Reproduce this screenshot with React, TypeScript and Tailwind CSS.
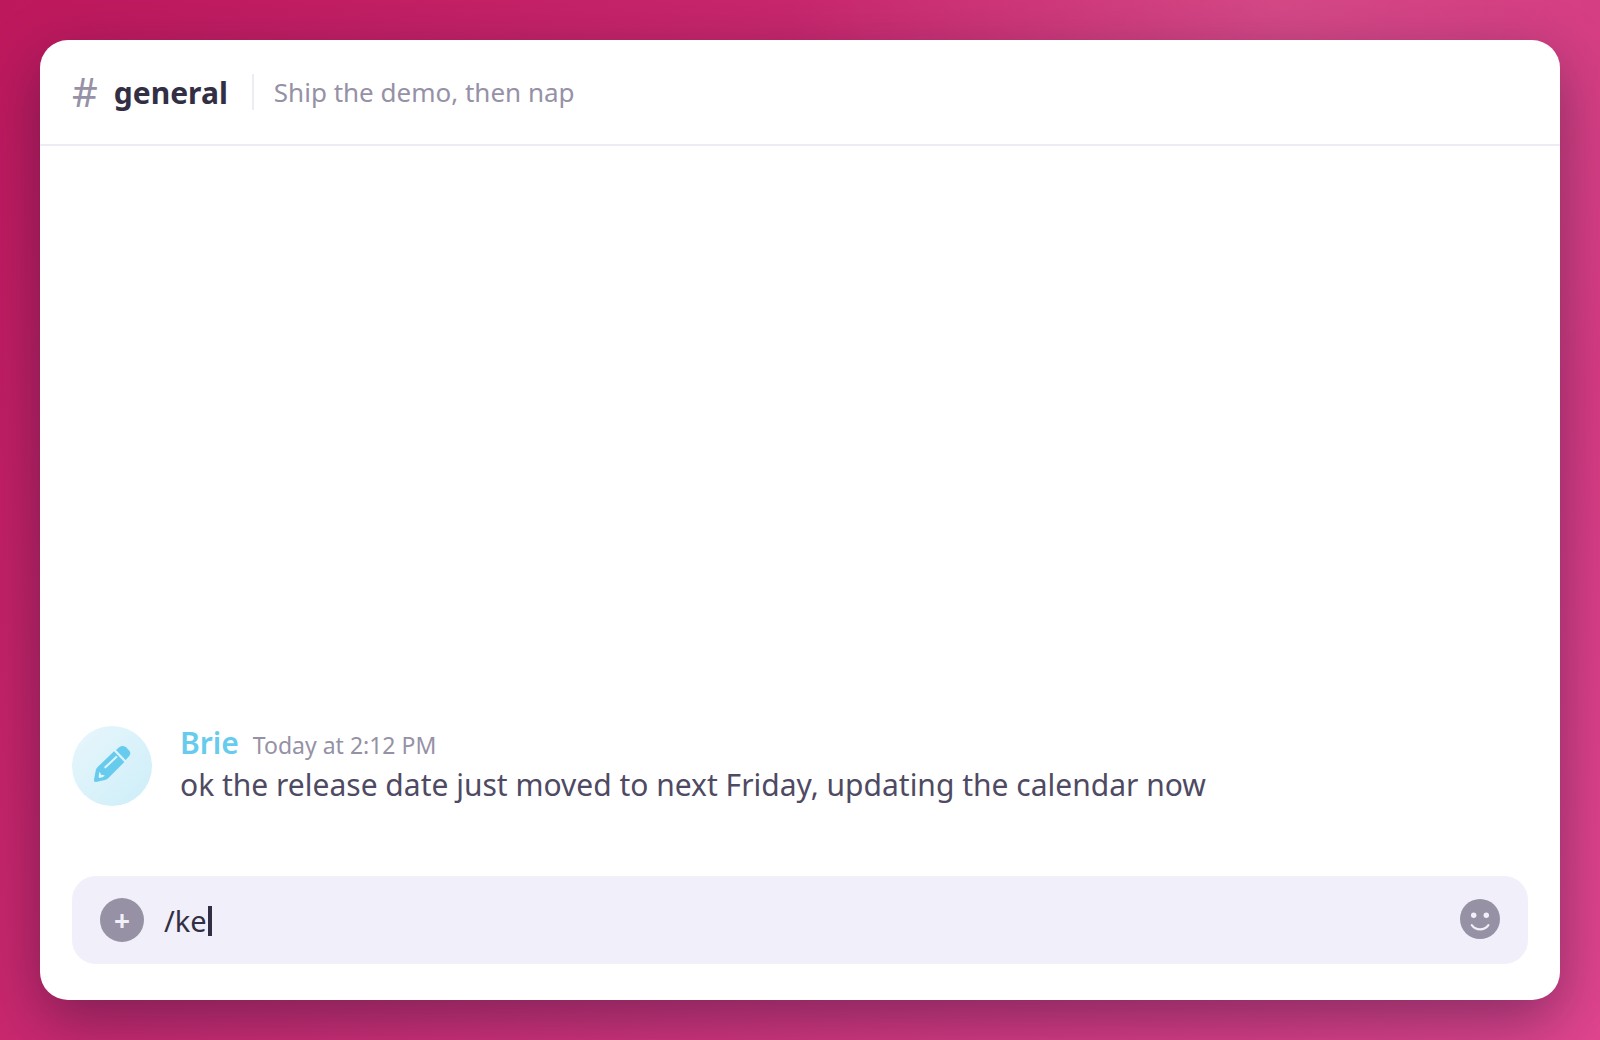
import { useState } from "react";

function ChannelHeader() {
  return (
    <header className="flex h-[106px] shrink-0 items-center border-b-2 border-[#edecf5] px-8">
      <span aria-hidden="true" className="text-[40px] leading-none text-[#9691a6]">#</span>
      <h1 className="ml-4 pt-0.5 text-[30px] leading-10 font-bold text-[#322f44]">general</h1>
      <span aria-hidden="true" className="mr-5 ml-6 h-9 w-0.5 bg-[#edecf5]" />
      <p className="text-[26px] leading-9 text-[#9691a6]">Ship the demo, then nap</p>
    </header>
  );
}

function PencilIcon() {
  return (
    <svg viewBox="0 0 120 120" aria-hidden="true" className="size-10">
      <path
        d="M66 22 17 69Q12 74 11 80L6 107Q5 115 12 114L38 108Q45 106 50 101L97 54Z"
        fill="#67cbed"
      />
      <path d="M72 18 82 10Q92 2 102 10L112 20Q118 28 111 37L101 48Z" fill="#67cbed" />
      <path d="M40 70 73 39" fill="none" stroke="#e2f5fb" strokeWidth="6" strokeLinecap="round" />
      <path d="M22 84Q25 85 27 92 34 92 39 95 31 101 23 102 19 101 20 96Z" fill="#e2f5fb" />
    </svg>
  );
}

function Message() {
  return (
    <article className="flex gap-7">
      <div className="flex size-20 shrink-0 items-center justify-center rounded-full bg-linear-135 from-[#e8f6fb] to-[#cdeef9] pb-1">
        <PencilIcon />
      </div>
      <div>
        <div className="flex items-baseline gap-3.5">
          <h2 className="text-[30px] leading-[34px] font-semibold text-[#67cbed]">Brie</h2>
          <time className="text-[23px] leading-[34px] text-[#9691a6]">Today at 2:12 PM</time>
        </div>
        <p className="text-[30px] leading-[46px] text-[#4f4a63]">
          ok the release date just moved to next Friday, updating the calendar now
        </p>
      </div>
    </article>
  );
}

function SmileIcon() {
  return (
    <svg viewBox="0 0 40 40" aria-hidden="true" className="size-10">
      <circle cx="20" cy="20" r="20" fill="#9691a4" />
      <circle cx="13.7" cy="16.3" r="2.7" fill="#f1f0fa" />
      <circle cx="26.3" cy="16.3" r="2.7" fill="#f1f0fa" />
      <path d="M11.8 26.2a10.2 10.2 0 0 0 16.6 0" fill="none" stroke="#f1f0fa" strokeWidth="2.2" strokeLinecap="round" />
    </svg>
  );
}

function Composer() {
  const [draft, setDraft] = useState("/ke");
  return (
    <form className="flex h-[88px] items-center rounded-3xl bg-[#f1f0fa] px-7" onSubmit={(e) => e.preventDefault()}>
      <button
        type="button"
        aria-label="Add attachment"
        className="flex size-11 shrink-0 items-center justify-center rounded-full bg-[#9691a4] text-[28px] leading-none font-bold text-[#f1f0fa]"
      >
        +
      </button>
      <label className="ml-5 flex flex-1 items-center pt-0.5">
        <input
          type="text"
          aria-label="Message general"
          value={draft}
          onChange={(e) => setDraft(e.target.value)}
          className="field-sizing-content h-11 pb-0.5 text-[29px] text-[#322f44] caret-transparent outline-none"
        />
        <span aria-hidden="true" className="ml-px h-[30px] w-1 bg-[#322f44]" />
      </label>
      <button type="button" aria-label="Choose emoji" className="shrink-0 pb-0.5">
        <SmileIcon />
      </button>
    </form>
  );
}

export default function App() {
  return (
    <div className="flex min-h-screen bg-[radial-gradient(circle_at_80%_0%,rgba(255,255,255,0.12),transparent_30%),linear-gradient(130deg,#be185d,#e0458f)] p-10 font-['Noto_Sans',sans-serif]">
      <main className="flex flex-1 flex-col overflow-hidden rounded-[28px] bg-white shadow-[0_20px_60px_rgba(30,20,50,0.45)]">
        <ChannelHeader />
        <section aria-label="Messages" className="flex flex-1 flex-col justify-end px-8 pb-[68px]">
          <Message />
        </section>
        <div className="px-8 pb-9">
          <Composer />
        </div>
      </main>
    </div>
  );
}
